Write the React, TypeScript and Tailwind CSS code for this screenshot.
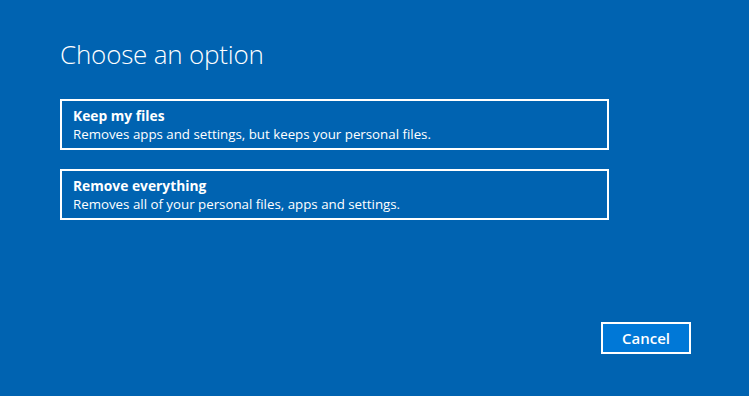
export default function App() {
  const options = [
    {
      title: "Keep my files",
      desc: "Removes apps and settings, but keeps your personal files.",
    },
    {
      title: "Remove everything",
      desc: "Removes all of your personal files, apps and settings.",
    },
  ];

  return (
    <div
      className="w-[749px] h-[396px] bg-[#0063b1] text-white flex flex-col pl-[60px] pr-[58px]"
      style={{ fontFamily: '"Open Sans", "Noto Sans", sans-serif' }}
    >
      <h1 className="mt-[36px] text-[26px] leading-[36px] font-light tracking-[-0.2px]">
        Choose an option
      </h1>
      <div className="mt-[27px] flex flex-col gap-[19px]">
        {options.map((opt) => (
          <button
            key={opt.title}
            className="w-[549px] h-[51px] border-2 border-white text-left pl-[11px] pt-[5px] flex flex-col"
          >
            <span className="text-[13.8px] leading-[19px] font-bold">{opt.title}</span>
            <span className="text-[13.3px] leading-[19px]">{opt.desc}</span>
          </button>
        ))}
      </div>
      <div className="flex-grow" />
      <div className="flex justify-end mb-[42px]">
        <button className="w-[90px] h-[32px] bg-[#0078d7] border-2 border-white text-[15px] font-semibold">
          Cancel
        </button>
      </div>
    </div>
  );
}
